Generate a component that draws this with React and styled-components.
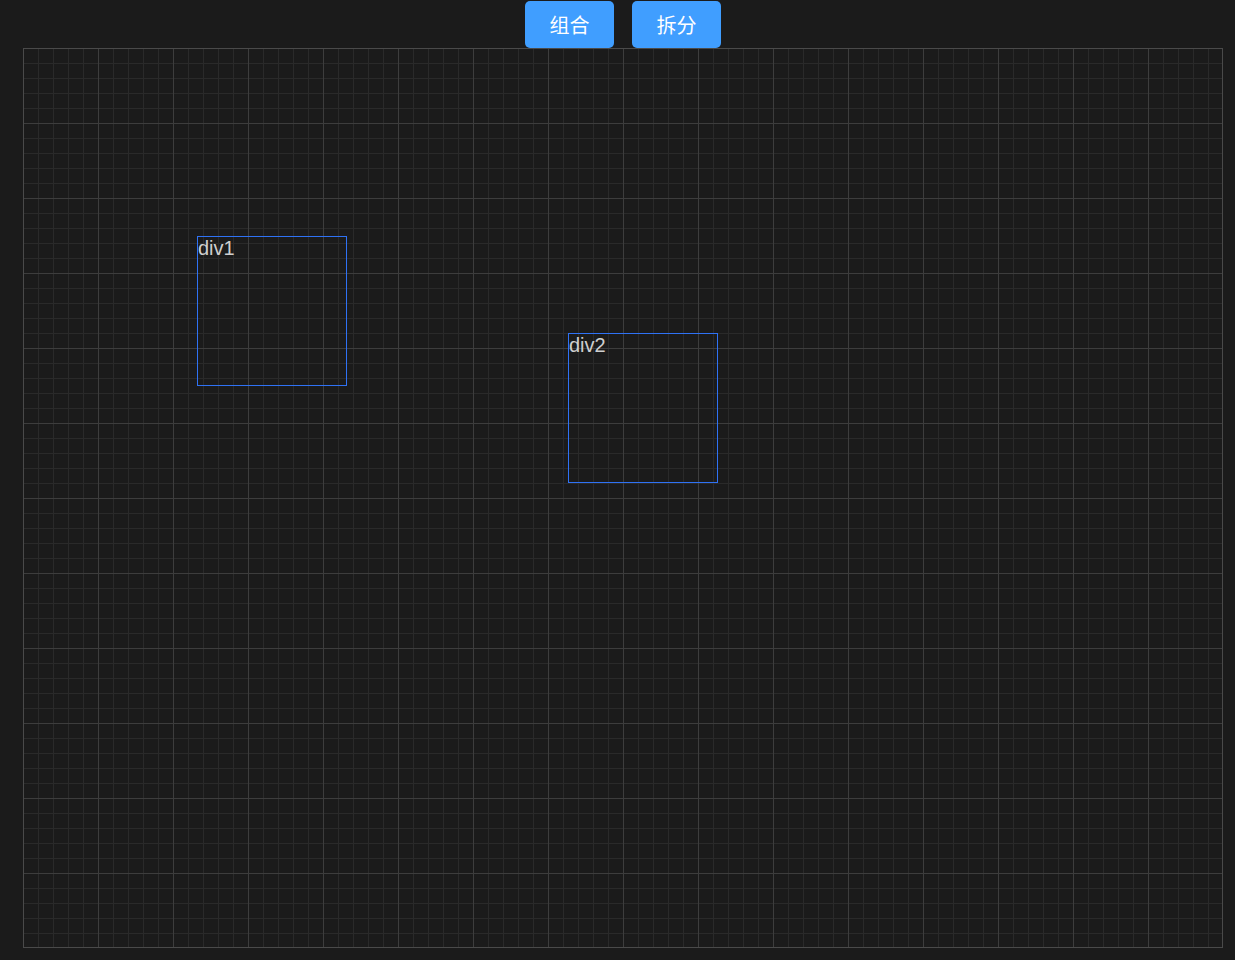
import React from 'react';
import styled, { createGlobalStyle } from 'styled-components';

const GlobalStyle = createGlobalStyle`
    html, body {
        margin: 0;
        padding: 0;
        background: #1b1b1b;
    }
    body {
        font-family: "Liberation Sans", Arial, "Noto Sans CJK SC", sans-serif;
    }
`;

// positions are inside the canvas border
const blocks = [
    { id: 'div1', left: 173, top: 187 },
    { id: 'div2', left: 544, top: 284 },
];

export default function App() {
    return (
        <Page>
            <GlobalStyle />
            <Toolbar>
                <Button>组合</Button>
                <Button>拆分</Button>
            </Toolbar>
            <Canvas>
                {blocks.map((b) => (
                    <Block key={b.id} $left={b.left} $top={b.top}>
                        {b.id}
                    </Block>
                ))}
            </Canvas>
        </Page>
    );
}

const Page = styled.div`
    width: 1200px;
    padding-left: 23px;
    display: flex;
    flex-direction: column;
`;

const Toolbar = styled.div`
    height: 48px;
    box-sizing: border-box;
    padding-top: 1px;
    display: flex;
    justify-content: center;
    align-items: flex-start;
    gap: 18px;
`;

const Button = styled.button`
    width: 89px;
    height: 47px;
    border: none;
    border-radius: 5px;
    background: #409eff;
    color: #ffffff;
    font-family: "Liberation Sans", "Noto Sans CJK SC", sans-serif;
    font-size: 20px;
    cursor: pointer;
    padding: 0;
`;

const Canvas = styled.div`
    position: relative;
    width: 1200px;
    height: 900px;
    box-sizing: border-box;
    border: 1px solid #4a4a4a;
    background-color: #1b1b1b;
    background-origin: border-box;
    background-image:
        linear-gradient(to right, #3d3d3d 1px, transparent 1px),
        linear-gradient(to bottom, #3d3d3d 1px, transparent 1px),
        linear-gradient(to right, #2a2a2a 1px, transparent 1px),
        linear-gradient(to bottom, #2a2a2a 1px, transparent 1px);
    background-size: 75px 75px, 75px 75px, 15px 15px, 15px 15px;
`;

const Block = styled.div`
    position: absolute;
    left: ${(p) => p.$left}px;
    top: ${(p) => p.$top}px;
    width: 150px;
    height: 150px;
    box-sizing: border-box;
    border: 1px solid #2f72f5;
    color: #cfcfcf;
    font-family: "Liberation Sans", Arial, sans-serif;
    font-size: 20px;
`;
